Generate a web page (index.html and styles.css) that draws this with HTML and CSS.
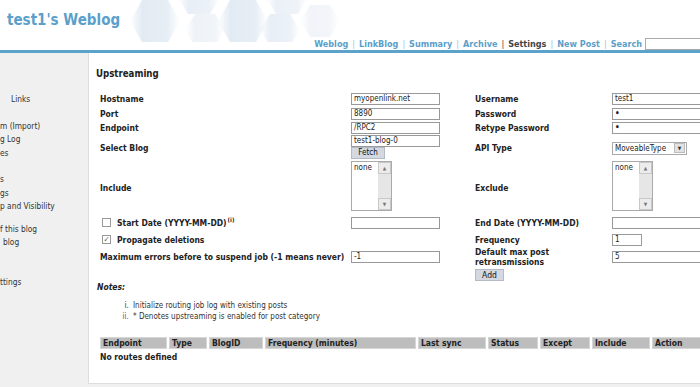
FILE: index.html
```html
<!DOCTYPE html>
<html>
<head>
<meta charset="utf-8">
<link rel="stylesheet" href="styles.css">
</head>
<body>
<header class="top">
  <svg class="hex" width="260" height="42" viewBox="0 0 260 42">
    <defs>
      <linearGradient id="fade" x1="0" x2="1" y1="0" y2="0">
        <stop offset="0" stop-color="#dfe8f2" stop-opacity="0"/>
        <stop offset="0.25" stop-color="#dfe8f2" stop-opacity="0.9"/>
        <stop offset="0.75" stop-color="#e4ecf4" stop-opacity="0.9"/>
        <stop offset="1" stop-color="#e8eef5" stop-opacity="0"/>
      </linearGradient>
    </defs>
    <g fill="url(#fade)">
      <polygon points="40,21 52,0 78,0 90,21 78,42 52,42"/>
      <polygon points="88,-2 98,-18 120,-18 130,-2 120,14 98,14" opacity="0.8"/>
      <polygon points="128,21 140,0 166,0 178,21 166,42 140,42"/>
      <polygon points="176,-2 186,-18 208,-18 218,-2 208,14 186,14" opacity="0.7"/>
      <polygon points="95,30 105,14 125,14 135,30 125,46 105,46" opacity="0.6"/>
      <polygon points="170,30 180,14 200,14 210,30 200,46 180,46" opacity="0.8"/>
      <polygon points="210,21 220,5 240,5 250,21 240,37 220,37" opacity="0.5"/>
    </g>
  </svg>
  <h1 class="title">test1's Weblog</h1>
  <nav class="nav">
    <a class="nav-link">Weblog</a><span class="sep">|</span>
    <a class="nav-link">LinkBlog</a><span class="sep">|</span>
    <a class="nav-link">Summary</a><span class="sep">|</span>
    <a class="nav-link">Archive</a><span class="sep dark">|</span>
    <span class="nav-current">Settings</span><span class="sep">|</span>
    <a class="nav-link">New Post</a><span class="sep">|</span>
    <a class="nav-link">Search</a>
    <input class="search" type="text">
  </nav>
</header>
<div class="rule"></div>
<div class="layout">
  <aside class="side">
    <ul class="grp g1"><li class="ind">Links</li></ul>
    <ul class="grp g2"><li>m (Import)</li><li>g Log</li><li>es</li></ul>
    <ul class="grp g3"><li>s</li><li>gs</li><li>p and Visibility</li></ul>
    <ul class="grp g4"><li>f this blog</li><li class="ind2">blog</li></ul>
    <ul class="grp g5"><li>ttings</li></ul>
  </aside>
  <main class="main">
    <h2 class="heading">Upstreaming</h2>
    <div class="form">
      <div class="lbl">Hostname</div>
      <div class="fld"><div class="inp w89">myopenlink.net</div></div>
      <div class="lbl">Username</div>
      <div class="fld"><div class="inp w100">test1</div></div>

      <div class="lbl">Port</div>
      <div class="fld"><div class="inp w89">8890</div></div>
      <div class="lbl">Password</div>
      <div class="fld"><div class="inp w100 dot">•</div></div>

      <div class="lbl">Endpoint</div>
      <div class="fld"><div class="inp w89">/RPC2</div></div>
      <div class="lbl">Retype Password</div>
      <div class="fld"><div class="inp w100 dot">•</div></div>

      <div class="lbl">Select Blog</div>
      <div class="fld col"><div class="inp w89">test1-blog-0</div><div class="btn fetch">Fetch</div></div>
      <div class="lbl">API Type</div>
      <div class="fld"><div class="select"><span class="sel-text">MoveableType</span><span class="sel-btn">▼</span></div></div>

      <div class="lbl">Include</div>
      <div class="fld top"><div class="listbox"><span class="lb-text">none</span><span class="sb"><span class="sb-btn">▲</span><span class="sb-track"></span><span class="sb-btn">▼</span></span></div></div>
      <div class="lbl">Exclude</div>
      <div class="fld top"><div class="listbox"><span class="lb-text">none</span><span class="sb"><span class="sb-btn">▲</span><span class="sb-track"></span><span class="sb-btn">▼</span></span></div></div>

      <div class="lbl chk"><span class="box"></span><span>Start Date (YYYY-MM-DD)<sup class="sup">(i)</sup></span></div>
      <div class="fld"><div class="inp w89"></div></div>
      <div class="lbl">End Date (YYYY-MM-DD)</div>
      <div class="fld"><div class="inp w100"></div></div>

      <div class="lbl chk"><span class="box checked">✓</span>Propagate deletions</div>
      <div class="fld"></div>
      <div class="lbl">Frequency</div>
      <div class="fld"><div class="inp w30">1</div></div>

      <div class="lbl">Maximum errors before to suspend job (-1 means never)</div>
      <div class="fld"><div class="inp w89">-1</div></div>
      <div class="lbl">Default max post retransmissions</div>
      <div class="fld"><div class="inp w100">5</div></div>

      <div class="lbl"></div>
      <div class="fld"></div>
      <div class="lbl"><div class="btn add">Add</div></div>
      <div class="fld"></div>
    </div>

    <div class="notes">
      <div class="notes-title">Notes:</div>
      <ol class="notes-list">
        <li>Initialize routing job log with existing posts</li>
        <li class="alt">* Denotes upstreaming is enabled for post category</li>
      </ol>
    </div>

    <table class="routes">
      <thead>
        <tr>
          <th class="c1">Endpoint</th><th class="c2">Type</th><th class="c3">BlogID</th><th class="c4">Frequency (minutes)</th><th class="c5">Last sync</th><th class="c6">Status</th><th class="c7">Except</th><th class="c8">Include</th><th class="c9">Action</th>
        </tr>
      </thead>
      <tbody>
        <tr><td colspan="9" class="empty">No routes defined</td></tr>
      </tbody>
    </table>
  </main>
</div>
</body>
</html>
```
FILE: styles.css
```css
html, body {
  margin: 0;
  padding: 0;
  overflow: hidden;
}
body {
  width: 700px;
  height: 387px;
  background: #f0f0f0;
  font-family: "DejaVu Sans Condensed", "DejaVu Sans", sans-serif;
  font-size: 8px;
  color: #222;
}
.top {
  position: relative;
  height: 50px;
  background: #fff;
}
.hex {
  position: absolute;
  left: 90px;
  top: 0;
}
.title {
  position: relative;
  margin: 0;
  padding: 10px 0 0 7px;
  font-size: 15px;
  font-weight: bold;
  color: #5b9fca;
  line-height: 20px;
  height: 20px;
}
.nav {
  display: flex;
  justify-content: flex-end;
  align-items: center;
  margin-top: 8px;
  font-size: 9px;
  font-weight: bold;
  color: #5b9fca;
  height: 12px;
}
.nav-link { color: #5b9fca; }
.nav-current { color: #444; }
.sep { color: #9bbfd8; margin: 0 4px; font-weight: normal; }
.sep.dark { color: #444; }
.search {
  box-sizing: border-box;
  width: 60px;
  height: 12px;
  margin: 0 -5px 0 3px;
  border: 1px solid #aaa;
  padding: 0;
}
.rule {
  height: 3px;
  background: #5ca3cc;
}
.layout {
  display: flex;
  height: 331px;
}
.side {
  width: 88px;
  flex: none;
  color: #333;
  padding-top: 40px;
  font-size: 8.3px;
}
.grp {
  list-style: none;
  margin: 0;
  padding: 0;
}
.grp li {
  line-height: 13.5px;
  white-space: nowrap;
}
.g2 { margin-top: 13px; }
.g3 { margin-top: 13px; }
.g4 { margin-top: 9px; }
.g5 { margin-top: 26px; }
.ind { padding-left: 11px; }
.ind2 { padding-left: 3px; }
.main {
  flex: 1;
  background: #fff;
  border-left: 1px solid #ddd;
  border-bottom: 1px solid #ddd;
  padding: 15px 0 0 7px;
  overflow: hidden;
}
.heading {
  margin: 0;
  font-size: 9.6px;
  font-weight: bold;
  line-height: 12px;
  color: #222;
}
.form {
  display: grid;
  grid-template-columns: 251px 124px 137px 100px;
  grid-template-rows: 15px 15px 14px 26px 53px 17px 17px 18px 14px;
  margin: 11px 0 0 4px;
  width: 612px;
}
.lbl {
  font-weight: bold;
  font-size: 8.5px;
  display: flex;
  align-items: center;
  line-height: 10px;
  white-space: nowrap;
}
.lbl:nth-child(4n+3) { white-space: normal; }
.fld {
  display: flex;
  align-items: center;
}
.fld.col {
  flex-direction: column;
  align-items: flex-start;
  justify-content: flex-start;
}
.fld.top { align-items: flex-start; }
.inp {
  box-sizing: border-box;
  height: 12px;
  border: 1px solid #999;
  background: #fff;
  padding: 0 2px;
  line-height: 10px;
  font-size: 8px;
  color: #222;
  white-space: nowrap;
  overflow: hidden;
}
.w89 { width: 89px; }
.w100 { width: 100px; }
.w30 { width: 30px; }
.dot { font-size: 8px; font-weight: bold; }
.btn {
  box-sizing: border-box;
  height: 12px;
  background: #d3d8e1;
  border: 1px solid #b4bac6;
  line-height: 10px;
  font-weight: normal;
  color: #111;
  text-align: center;
  font-size: 8px;
}
.fetch { width: 34px; }
.add { width: 29px; margin-top: 4px; font-size: 8.5px; }
.select {
  box-sizing: border-box;
  display: flex;
  align-items: center;
  width: 75px;
  height: 13px;
  border: 1px solid #aaa;
  background: #fff;
  padding-left: 2px;
  font-size: 8px;
}
.sel-text { flex: 1; }
.sel-btn {
  width: 11px;
  height: 10px;
  margin-right: 1px;
  background: #e2e2e2;
  border: 1px solid #bbb;
  box-sizing: border-box;
  font-size: 5px;
  line-height: 8px;
  text-align: center;
  color: #333;
}
.listbox {
  box-sizing: border-box;
  display: flex;
  width: 41px;
  height: 50px;
  border: 1px solid #aaa;
  background: #fff;
}
.lb-text {
  flex: 1;
  padding: 1px 0 0 2px;
  line-height: 10px;
}
.sb {
  display: flex;
  flex-direction: column;
  width: 13px;
  background: #e6e6e6;
}
.sb-btn {
  height: 12px;
  box-sizing: border-box;
  border: 1px solid #c8c8c8;
  background: #ececec;
  color: #777;
  font-size: 5px;
  line-height: 10px;
  text-align: center;
}
.sb-track { flex: 1; }
.chk { padding-left: 2px; }
.box {
  box-sizing: border-box;
  width: 9px;
  height: 9px;
  border: 1px solid #999;
  background: #fff;
  margin-right: 6px;
  font-size: 8px;
  line-height: 7px;
  color: #555;
  text-align: center;
  font-weight: normal;
}
.sup { font-size: 6px; vertical-align: 4px; line-height: 0; margin-left: 1px; }
.notes {
  margin-top: 1px;
  padding-left: 1px;
}
.notes-title {
  font-weight: bold;
  font-style: italic;
  font-size: 8.5px;
  line-height: 12px;
}
.notes-list {
  list-style: lower-roman;
  margin: 8px 0 0 0;
  padding-left: 34px;
  color: #333;
}
.notes-list li { line-height: 10.5px; padding-left: 2px; }
.notes-list li.alt::marker { color: #b0402c; }
.routes {
  border-collapse: separate;
  border-spacing: 2px 0;
  margin: 15px 0 0 2px;
  width: 622px;
  table-layout: fixed;
}
.routes th {
  box-sizing: border-box;
  background: #bdbdbd;
  border: 1px solid #d6d6d6;
  height: 12px;
  padding: 0 2px;
  text-align: left;
  font-size: 8.5px;
  font-weight: bold;
  color: #222;
  line-height: 10px;
  white-space: nowrap;
  overflow: hidden;
}
.c1 { width: 67px; }
.c2 { width: 38px; }
.c3 { width: 54px; }
.c4 { width: 151px; }
.c5 { width: 68px; }
.c6 { width: 50px; }
.c7 { width: 50px; }
.c8 { width: 58px; }
.c9 { width: 66px; }
.routes td.empty {
  font-weight: bold;
  font-size: 8.5px;
  padding: 3px 0 0 0;
  line-height: 10px;
}
```
